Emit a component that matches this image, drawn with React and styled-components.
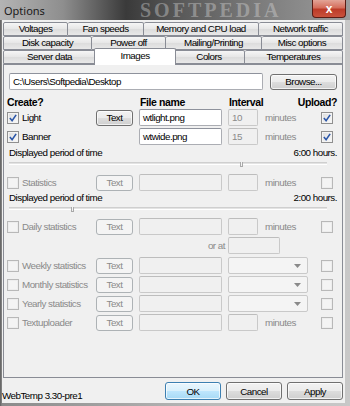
import React from "react";
import styled, { createGlobalStyle } from "styled-components";

const GlobalStyle = createGlobalStyle`
  html, body { margin: 0; padding: 0; background: #6a6a6a; }
  body {
    font-family: "Liberation Sans", Arial, sans-serif;
    font-size: 9.8px;
    letter-spacing: -0.5px;
    color: #000;
  }
  * { box-sizing: border-box; }
`;

const Window = styled.div`
  width: 350px;
  height: 406px;
  display: flex;
  flex-direction: column;
  background: linear-gradient(90deg, #5e5e5e 0, #8a8a8a 2px, #b9b9b9 60%, #c8c8c8 100%);
  overflow: hidden;
`;

const TitleBar = styled.div`
  height: 20px;
  display: flex;
  align-items: flex-start;
  background: linear-gradient(90deg, #b4b4b4 0%, #8e8e8e 18%, #3a3a3a 36%, #5a5a5a 52%, #7d7d7d 75%, #9c9c9c 100%);
`;

const Title = styled.div`
  font-family: "Noto Sans", "Liberation Sans", sans-serif;
  font-size: 11px;
  letter-spacing: 0;
  color: #1a1a1a;
  padding: 3px 0 0 4px;
  width: 140px;
`;

const Watermark = styled.div`
  flex: 1;
  font-family: "Liberation Serif", serif;
  font-weight: bold;
  font-size: 20px;
  letter-spacing: 3px;
  line-height: 20px;
  color: rgba(220, 220, 220, 0.4);
`;

const CloseButton = styled.div`
  width: 34px;
  height: 18px;
  margin-right: 4px;
  border: 1px solid #5b1c14;
  border-top: none;
  border-radius: 0 0 4px 4px;
  background: linear-gradient(#e3a497 0%, #d56e5c 45%, #bd3b28 55%, #c9523c 100%);
  color: #fff;
  font-weight: bold;
  font-size: 12px;
  letter-spacing: 0;
  display: flex;
  align-items: center;
  justify-content: center;
`;

const Client = styled.div`
  flex: 1;
  margin: 0 5px 3px 2px;
  padding: 2px 0 0 1px;
  background: #f0f0f0;
  display: flex;
  flex-direction: column;
`;

const TabRow = styled.div`
  display: flex;
  width: 340px;
  height: 14px;
`;

const Tab = styled.div`
  position: relative;
  width: ${p => (p.$active ? p.$w + 4 : p.$w)}px;
  margin: ${p => (p.$active ? "-2px -2px 0" : "0")};
  height: ${p => (p.$active ? 17 : 14)}px;
  z-index: ${p => (p.$active ? 2 : 1)};
  border: 1px solid #898c95;
  border-bottom: ${p => (p.$active ? "none" : "1px solid #898c95")};
  border-left-width: ${p => (p.$first || p.$active ? 1 : 0)}px;
  border-radius: 2px 2px 0 0;
  background: ${p => (p.$active ? "#fff" : "linear-gradient(#f6f6f6, #e6e6e6 50%, #dcdcdc 51%, #e8e8e8)")};
  line-height: 12px;
  text-align: center;
  padding-top: ${p => (p.$active ? 1 : 0)}px;
  white-space: nowrap;
`;

const Panel = styled.div`
  width: 340px;
  height: 314px;
  border: 1px solid #898c95;
  background: #f0f0f0;
  padding: 8px 0 0 3px;
  display: flex;
  flex-direction: column;
`;

const PathRow = styled.div`
  display: flex;
  align-items: center;
  padding-left: 2px;
  gap: 7px;
`;

const TextBox = styled.div`
  width: ${p => p.$w}px;
  height: 17px;
  border: 1px solid ${p => (p.$disabled ? "#c9c9c9" : "#abadb3")};
  border-top-color: ${p => (p.$disabled ? "#bdbdbd" : "#8e929c")};
  background: ${p => (p.$disabled ? "#f0f0f0" : "#fff")};
  color: ${p => (p.$dim ? "#8a8a8a" : "#000")};
  padding: 1px 3px;
  line-height: 13px;
  border-radius: 2px;
  white-space: nowrap;
  overflow: hidden;
`;

const Button = styled.div`
  width: ${p => p.$w}px;
  height: ${p => p.$h || 16}px;
  border: 1px solid ${p => (p.$disabled ? "#adb2b5" : p.$default ? "#3c7fb1" : "#707070")};
  border-radius: 3px;
  background: ${p =>
    p.$disabled
      ? "#f4f4f4"
      : p.$default
      ? "linear-gradient(#eaf6fd, #d9f0fc 50%, #bee6fd 51%, #a7d9f5)"
      : "linear-gradient(#f2f2f2, #ebebeb 50%, #dddddd 51%, #cfcfcf)"};
  box-shadow: inset 0 0 0 1px ${p => (p.$disabled ? "transparent" : "rgba(255,255,255,0.7)")};
  color: ${p => (p.$disabled ? "#8a8a8a" : "#000")};
  display: flex;
  align-items: center;
  justify-content: center;
`;

const Row = styled.div`
  display: grid;
  grid-template-columns: 89px 43px 89px 35px 58px 16px;
  align-items: center;
  height: ${p => p.$h || 17}px;
  margin-top: ${p => p.$mt || 0}px;
`;

const HeadCell = styled.div`
  font-weight: bold;
  font-size: 10.5px;
  letter-spacing: -0.4px;
  grid-column: ${p => p.$col};
  text-align: ${p => p.$align || "left"};
  padding-left: ${p => p.$pl || 0}px;
  white-space: nowrap;
`;

const CheckLabel = styled.label`
  display: flex;
  align-items: center;
  gap: 3px;
  color: ${p => (p.$disabled ? "#8a8a8a" : "#000")};
  white-space: nowrap;
`;

const Box = styled.span`
  width: 12px;
  height: 12px;
  border: 1px solid ${p => (p.$disabled ? "#b8b8b8" : "#8f8f8f")};
  background: ${p => (p.$disabled ? "#f4f4f4" : "linear-gradient(135deg, #dcdcdc, #fbfbfb)")};
  box-shadow: inset 0 0 0 1px ${p => (p.$disabled ? "#ededed" : "#f4f4f4")};
  display: inline-flex;
  align-items: center;
  justify-content: center;
  flex: none;
`;

const Muted = styled.span`
  color: #8a8a8a;
  padding-left: 2px;
  grid-column: ${p => p.$col || "auto"};
  text-align: ${p => p.$align || "left"};
  padding-right: ${p => p.$pr || 0}px;
`;

const Combo = styled.div`
  grid-column: 4 / span 2;
  width: 80px;
  height: 17px;
  border: 1px solid #c9c9c9;
  border-radius: 2px;
  background: #f4f4f4;
  display: flex;
  justify-content: flex-end;
  align-items: center;
  padding-right: 6px;
`;

const PeriodRow = styled.div`
  display: flex;
  justify-content: space-between;
  height: 13px;
  line-height: 13px;
  padding: 0 8px 0 2px;
  margin-top: ${p => p.$mt || 0}px;
  width: 338px;
`;

const Track = styled.div`
  position: relative;
  margin: ${p => p.$mt}px 0 0 2px;
  width: 318px;
  height: 3px;
  border-top: 1px solid #cfcfcf;
  border-bottom: 1px solid #fff;
  background: #e3e3e3;
`;

const Thumb = styled.span`
  position: absolute;
  top: -1px;
  width: 3px;
  height: 5px;
  border: 1px solid #a9a9a9;
  border-top: none;
  background: #f4f4f4;
`;

const Footer = styled.div`
  display: flex;
  align-items: center;
  height: 25px;
  padding-right: 2px;
`;

const Version = styled.div`
  flex: 1;
  align-self: flex-end;
  padding: 0 0 2px 0;
  margin-left: -1px;
`;

const Buttons = styled.div`
  display: flex;
  gap: 5px;
  margin-top: 1px;
`;

function Check({ checked, disabled, label }) {
  return (
    <CheckLabel $disabled={disabled}>
      <Box $disabled={disabled}>
        {checked && (
          <svg width="8" height="8" viewBox="0 0 9 9">
            <path d="M1 4.5 L3.5 7.5 L8 1" fill="none" stroke="#2b56a8" strokeWidth="1.8" />
          </svg>
        )}
      </Box>
      {label}
    </CheckLabel>
  );
}

function Arrow() {
  return (
    <svg width="7" height="4" viewBox="0 0 7 4">
      <path d="M0 0 L7 0 L3.5 4 Z" fill="#8a8a8a" />
    </svg>
  );
}

const tabRows = [
  [["Voltages", 65], ["Fan speeds", 76], ["Memory and CPU load", 115], ["Network traffic", 84]],
  [["Disk capacity", 89], ["Power off", 74], ["Mailing/Printing", 96], ["Misc options", 81]],
  [["Server data", 93], ["Images", 78], ["Colors", 71], ["Temperatures", 98]]
];

function StatRow({ label, mt, combo, upload = true }) {
  return (
    <Row $mt={mt}>
      <Check disabled label={label} />
      <Button $w={37} $disabled>Text</Button>
      <TextBox $w={83} $disabled />
      {combo ? (
        <Combo><Arrow /></Combo>
      ) : (
        <>
          <TextBox $w={30} $disabled />
          <Muted>minutes</Muted>
        </>
      )}
      {upload && <Check disabled />}
    </Row>
  );
}

export default function App() {
  return (
    <>
      <GlobalStyle />
      <Window>
        <TitleBar>
          <Title>Options</Title>
          <Watermark>SOFTPEDIA</Watermark>
          <CloseButton>x</CloseButton>
        </TitleBar>
        <Client>
          {tabRows.map((row, i) => (
            <TabRow key={i}>
              {row.map(([name, w], j) => (
                <Tab key={name} $w={w} $first={j === 0} $active={name === "Images"}>
                  {name}
                </Tab>
              ))}
            </TabRow>
          ))}
          <Panel>
            <PathRow>
              <TextBox $w={254}>C:\Users\Softpedia\Desktop</TextBox>
              <Button $w={67}>Browse...</Button>
            </PathRow>

            <Row $h={14} $mt={5}>
              <HeadCell $col="1">Create?</HeadCell>
              <HeadCell $col="3" $pl={1}>File name</HeadCell>
              <HeadCell $col="4" $pl={1}>Interval</HeadCell>
              <HeadCell $col="5 / span 2" $align="right">Upload?</HeadCell>
            </Row>

            <Row>
              <Check checked label="Light" />
              <Button $w={37}>Text</Button>
              <TextBox $w={83}>wtlight.png</TextBox>
              <TextBox $w={30} $disabled $dim>10</TextBox>
              <Muted>minutes</Muted>
              <Check checked />
            </Row>
            <Row $mt={2}>
              <Check checked label="Banner" />
              <span />
              <TextBox $w={83}>wtwide.png</TextBox>
              <TextBox $w={30} $disabled $dim>15</TextBox>
              <Muted>minutes</Muted>
              <Check checked />
            </Row>

            <PeriodRow $mt={1}>
              <span>Displayed period of time</span>
              <span>6:00 hours.</span>
            </PeriodRow>
            <Track $mt={3}>
              <Thumb style={{ left: 231 }} />
            </Track>

            <StatRow label="Statistics" mt={9} />

            <PeriodRow $mt={0}>
              <span>Displayed period of time</span>
              <span>2:00 hours.</span>
            </PeriodRow>
            <Track $mt={3}>
              <Thumb style={{ left: 62 }} />
            </Track>

            <StatRow label="Daily statistics" mt={8} />
            <Row $mt={2}>
              <span />
              <span />
              <Muted $align="right" $pr={3}>or at</Muted>
              <TextBox $w={52} $disabled style={{ gridColumn: "4 / span 2" }} />
            </Row>

            <StatRow label="Weekly statistics" mt={3} combo />
            <StatRow label="Monthly statistics" mt={2} combo />
            <StatRow label="Yearly statistics" mt={2} combo />
            <StatRow label="Textuploader" mt={2} />
          </Panel>
          <Footer>
            <Version>WebTemp 3.30-pre1</Version>
            <Buttons>
              <Button $w={56} $h={18} $default>OK</Button>
              <Button $w={56} $h={18}>Cancel</Button>
              <Button $w={56} $h={18}>Apply</Button>
            </Buttons>
          </Footer>
        </Client>
      </Window>
    </>
  );
}
